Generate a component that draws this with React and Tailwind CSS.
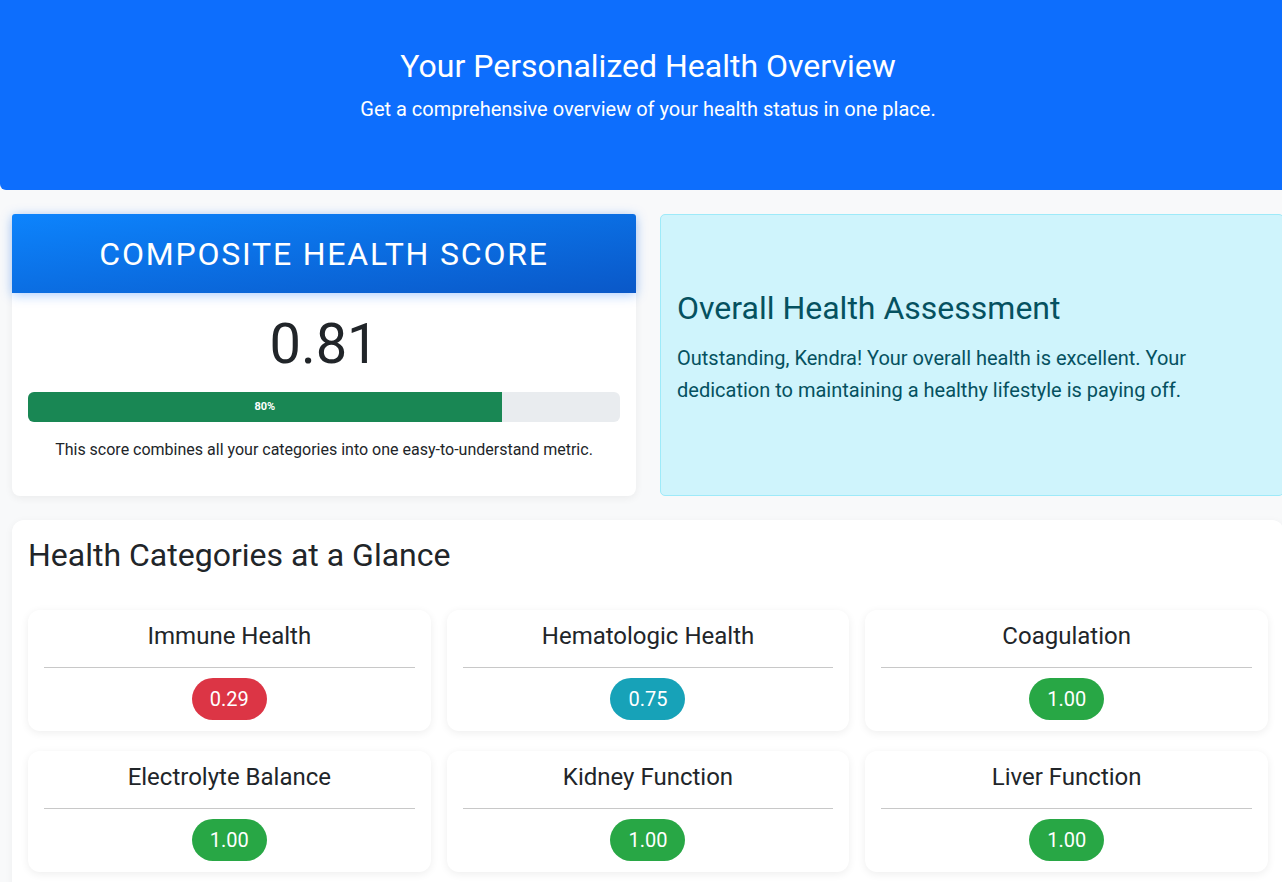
const CATEGORIES = [
  { name: 'Immune Health', score: '0.29', tone: 'bg-[#dc3545]' },
  { name: 'Hematologic Health', score: '0.75', tone: 'bg-[#17a2b8]' },
  { name: 'Coagulation', score: '1.00', tone: 'bg-[#28a745]' },
  { name: 'Electrolyte Balance', score: '1.00', tone: 'bg-[#28a745]' },
  { name: 'Kidney Function', score: '1.00', tone: 'bg-[#28a745]' },
  { name: 'Liver Function', score: '1.00', tone: 'bg-[#28a745]' },
];

function CategoryCard({ name, score, tone }) {
  return (
    <div className="bg-white rounded-xl shadow-[0_2px_8px_rgba(0,0,0,0.07)] px-4 pt-[10px] pb-[11px] flex flex-col items-center">
      <h3 className="text-[24px] leading-[32px] text-[#212529]">{name}</h3>
      <div className="w-full h-px bg-[#c8c8c8] mt-[15px] mb-[10px]" />
      <span className={`${tone} text-white text-[20px] leading-[42px] h-[42px] px-[18px] rounded-full`}>{score}</span>
    </div>
  );
}

export default function App() {
  const pct = 80;
  return (
    <div className="min-h-screen bg-[#f8f9fa] overflow-hidden font-['Roboto',sans-serif]">
      <div className="w-[1296px]">
        <header className="bg-[#0d6efd] text-white rounded-b-md h-[190px] flex flex-col items-center pt-[45px]">
          <h1 className="text-[32px] leading-[42px]">Your Personalized Health Overview</h1>
          <p className="text-[20px] leading-[28px] mt-[8px]">Get a comprehensive overview of your health status in one place.</p>
        </header>

        <div className="px-3 pt-6 grid grid-cols-2 gap-6">
          <div className="bg-white rounded-lg shadow-[0_2px_8px_rgba(0,0,0,0.06)] h-[282px] flex flex-col">
            <div className="h-[79px] rounded-t-[3px] bg-gradient-to-br from-[#0d84fd] to-[#0a58c8] shadow-[0_2px_12px_rgba(13,110,253,0.35)] flex items-center justify-center">
              <h2 className="text-white text-[32px] tracking-[1.8px] uppercase">Composite Health Score</h2>
            </div>
            <div className="px-4 flex flex-col items-center">
              <div className="text-[56px] leading-[68px] text-[#212529] mt-[17px]">0.81</div>
              <div className="w-full h-[30px] bg-[#e9ecef] rounded-md overflow-hidden mt-[14px] flex">
                <div className="h-full bg-[#198754] flex items-center justify-center text-white text-[11px] font-bold" style={{ width: `${pct}%` }}>
                  {pct}%
                </div>
              </div>
              <p className="text-[16px] leading-[24px] text-[#212529] mt-4">This score combines all your categories into one easy-to-understand metric.</p>
            </div>
          </div>

          <div className="bg-[#cff4fc] border border-[#9eeaf9] rounded-[5px] h-[282px] flex flex-col justify-center px-4 pb-[17px]">
            <h2 className="text-[32px] leading-[42px] text-[#055160]">Overall Health Assessment</h2>
            <p className="text-[20px] leading-[32px] text-[#055160] mt-[13px]">
              Outstanding, Kendra! Your overall health is excellent. Your<br />
              dedication to maintaining a healthy lifestyle is paying off.
            </p>
          </div>
        </div>

        <div className="mx-3 mt-6 bg-white rounded-xl shadow-[0_2px_8px_rgba(0,0,0,0.05)] px-4 pt-[14px] pb-6">
          <h2 className="text-[32px] leading-[42px] text-[#212529] mb-[34px]">Health Categories at a Glance</h2>
          <div className="grid grid-cols-3 gap-x-4 gap-y-[20px]">
            {CATEGORIES.map((c) => (
              <CategoryCard key={c.name} {...c} />
            ))}
          </div>
        </div>
      </div>
    </div>
  );
}
